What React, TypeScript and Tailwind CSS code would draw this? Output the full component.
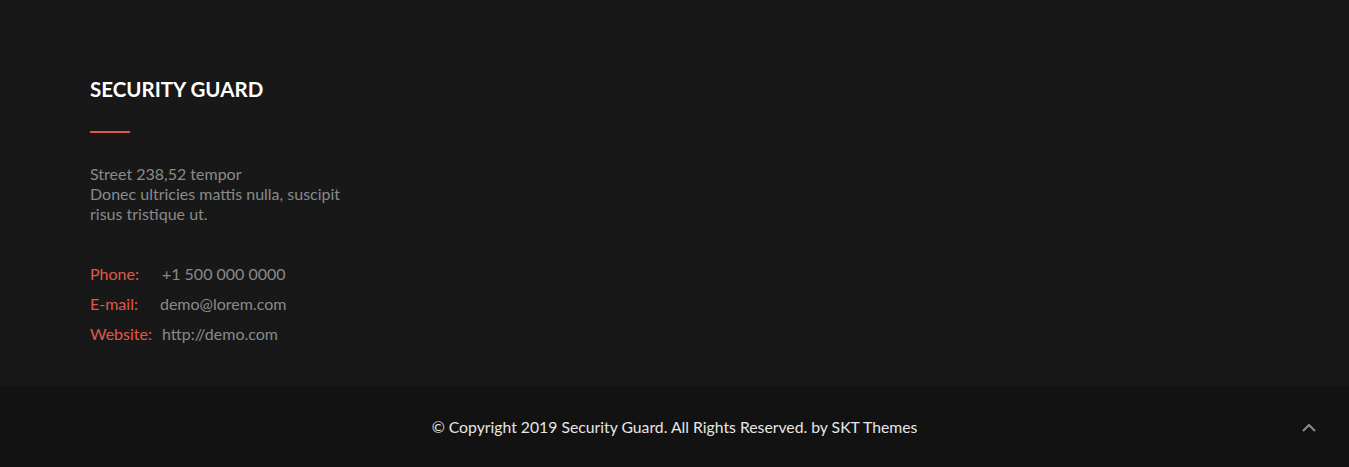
import React from "react";

export default function App() {
  const font = { fontFamily: "Lato, 'Noto Sans', sans-serif" };
  return (
    <div className="w-[1349px] h-[467px] flex flex-col bg-[#181818]" style={font}>
      <div className="h-[386px] pl-[90px] pt-[77px] flex flex-col">
        <h3 className="text-[20.5px] leading-[24px] font-bold text-white">SECURITY GUARD</h3>
        <div className="mt-[30px] w-[40px] h-[2px] bg-[#e0574a]"></div>
        <div className="mt-[31px] text-[16px] leading-[20px] text-[#8a8a8a] w-[260px]">
          <div>Street 238,52 tempor</div>
          <div>Donec ultricies mattis nulla, suscipit</div>
          <div>risus tristique ut.</div>
        </div>
        <div className="mt-[35px] text-[16px] leading-[30px]">
          <div className="flex">
            <span className="text-[#e0574a]">Phone:</span>
            <span className="ml-[23px] text-[#8a8a8a]">+1 500 000 0000</span>
          </div>
          <div className="flex">
            <span className="text-[#e0574a]">E-mail:</span>
            <span className="ml-[22px] text-[#8a8a8a]">demo@lorem.com</span>
          </div>
          <div className="flex">
            <span className="text-[#e0574a]">Website:</span>
            <span className="ml-[10px] text-[#8a8a8a]">http://demo.com</span>
          </div>
        </div>
      </div>
      <div className="relative flex-1 bg-[#121212] flex items-center justify-center">
        <p className="text-[15.75px] text-[#e6e6e6]">© Copyright 2019 Security Guard. All Rights Reserved. by SKT Themes</p>
        <svg className="absolute left-[1301px] top-[37px]" width="16" height="10" viewBox="0 0 16 10" fill="none">
          <path d="M2 8 L8 2 L14 8" stroke="#8c8c8c" strokeWidth="2" />
        </svg>
      </div>
    </div>
  );
}
